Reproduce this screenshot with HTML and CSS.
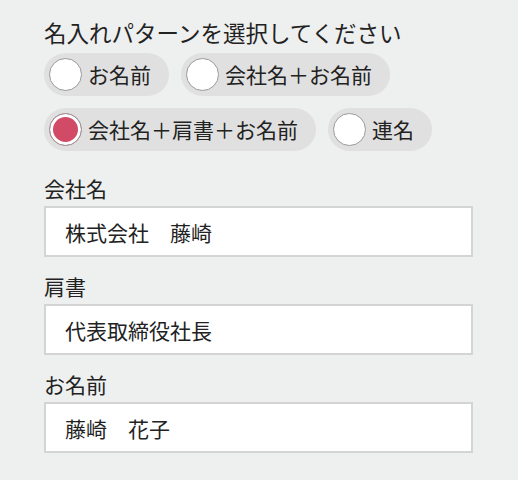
FILE: index.html
```html
<!DOCTYPE html>
<html lang="ja">
<head>
<meta charset="utf-8">
<link rel="stylesheet" href="styles.css">
</head>
<body>
<div class="page">
  <div class="title">名入れパターンを選択してください</div>
  <div class="options">
    <div class="pill"><span class="radio"></span><span class="pill-text">お名前</span></div>
    <div class="pill"><span class="radio"></span><span class="pill-text">会社名＋お名前</span></div>
    <div class="pill"><span class="radio checked"></span><span class="pill-text">会社名＋肩書＋お名前</span></div>
    <div class="pill"><span class="radio"></span><span class="pill-text">連名</span></div>
  </div>
  <div class="field">
    <div class="label">会社名</div>
    <div class="input">株式会社　藤崎</div>
  </div>
  <div class="field">
    <div class="label">肩書</div>
    <div class="input">代表取締役社長</div>
  </div>
  <div class="field">
    <div class="label">お名前</div>
    <div class="input">藤崎　花子</div>
  </div>
</div>
</body>
</html>
```
FILE: styles.css
```css
html, body {
  margin: 0;
  padding: 0;
  background: #eeefef;
}
body {
  font-family: "Noto Sans CJK JP", "Noto Sans", sans-serif;
  color: #222;
}
.page {
  padding: 16px 45px 0 44px;
}
.title {
  font-size: 22.5px;
  line-height: 32px;
}
.options {
  display: flex;
  flex-wrap: wrap;
  gap: 12px;
  margin-top: 5px;
  width: 400px;
}
.pill {
  display: flex;
  align-items: center;
  gap: 6px;
  height: 43px;
  box-sizing: border-box;
  padding: 0 18px 1px 5px;
  border-radius: 22px;
  background: #e0e0e0;
}
.radio {
  width: 33px;
  height: 33px;
  box-sizing: border-box;
  border-radius: 50%;
  border: 1.5px solid #999;
  background: #fff;
  flex: none;
}
.radio.checked {
  background: #d14b66;
  box-shadow: inset 0 0 0 3px #fff;
}
.pill-text {
  font-size: 21px;
  line-height: 28px;
}
.field {
  margin-top: 23px;
}
.field + .field {
  margin-top: 15px;
}
.label {
  font-size: 21px;
  line-height: 28px;
  margin-bottom: 4px;
}
.input {
  height: 51px;
  box-sizing: border-box;
  border: 2px solid #d4d4d4;
  background: #fff;
  padding-left: 19px;
  display: flex;
  align-items: center;
  font-size: 21px;
}
```
